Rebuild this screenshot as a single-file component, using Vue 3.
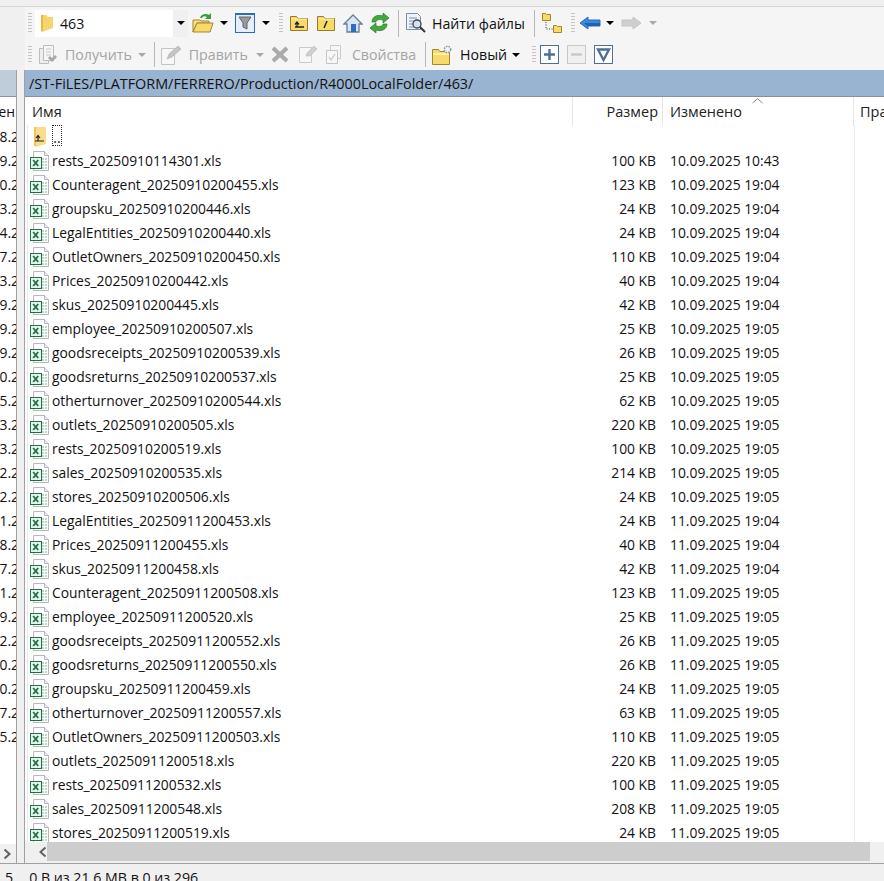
<script setup>
const files = [
  ['rests_20250910114301.xls', '100 KB', '10.09.2025 10:43'],
  ['Counteragent_20250910200455.xls', '123 KB', '10.09.2025 19:04'],
  ['groupsku_20250910200446.xls', '24 KB', '10.09.2025 19:04'],
  ['LegalEntities_20250910200440.xls', '24 KB', '10.09.2025 19:04'],
  ['OutletOwners_20250910200450.xls', '110 KB', '10.09.2025 19:04'],
  ['Prices_20250910200442.xls', '40 KB', '10.09.2025 19:04'],
  ['skus_20250910200445.xls', '42 KB', '10.09.2025 19:04'],
  ['employee_20250910200507.xls', '25 KB', '10.09.2025 19:05'],
  ['goodsreceipts_20250910200539.xls', '26 KB', '10.09.2025 19:05'],
  ['goodsreturns_20250910200537.xls', '25 KB', '10.09.2025 19:05'],
  ['otherturnover_20250910200544.xls', '62 KB', '10.09.2025 19:05'],
  ['outlets_20250910200505.xls', '220 KB', '10.09.2025 19:05'],
  ['rests_20250910200519.xls', '100 KB', '10.09.2025 19:05'],
  ['sales_20250910200535.xls', '214 KB', '10.09.2025 19:05'],
  ['stores_20250910200506.xls', '24 KB', '10.09.2025 19:05'],
  ['LegalEntities_20250911200453.xls', '24 KB', '11.09.2025 19:04'],
  ['Prices_20250911200455.xls', '40 KB', '11.09.2025 19:04'],
  ['skus_20250911200458.xls', '42 KB', '11.09.2025 19:04'],
  ['Counteragent_20250911200508.xls', '123 KB', '11.09.2025 19:05'],
  ['employee_20250911200520.xls', '25 KB', '11.09.2025 19:05'],
  ['goodsreceipts_20250911200552.xls', '26 KB', '11.09.2025 19:05'],
  ['goodsreturns_20250911200550.xls', '26 KB', '11.09.2025 19:05'],
  ['groupsku_20250911200459.xls', '24 KB', '11.09.2025 19:05'],
  ['otherturnover_20250911200557.xls', '63 KB', '11.09.2025 19:05'],
  ['OutletOwners_20250911200503.xls', '110 KB', '11.09.2025 19:05'],
  ['outlets_20250911200518.xls', '220 KB', '11.09.2025 19:05'],
  ['rests_20250911200532.xls', '100 KB', '11.09.2025 19:05'],
  ['sales_20250911200548.xls', '208 KB', '11.09.2025 19:05'],
  ['stores_20250911200519.xls', '24 KB', '11.09.2025 19:05']
]
const leftCol = ['8.2', '9.2', '0.2', '3.2', '4.2', '7.2', '3.2', '9.2', '9.2', '9.2', '0.2', '5.2', '3.2', '3.2', '2.2', '2.2', '1.2', '8.2', '7.2', '1.2', '9.2', '2.2', '0.2', '0.2', '7.2', '5.2']
</script>

<template>
  <div class="app">
    <div class="topline"></div>

    <div class="toolbar row1">
      <span class="grip"></span>
      <div class="combo">
        <svg class="combo_folder" width="13" height="22" viewBox="0 0 13 22"><path d="M0 3h5l2 2h5v11L1 20 0 19z" fill="#f7d56e"/><path d="M0 3h2v16H0z" fill="#e8b93f"/></svg>
        <span class="combo_text">463</span>
        <span class="combo_drop"><i class="arrow"></i></span>
      </div>
      <span class="cell w30">
        <svg width="22" height="22" viewBox="0 0 22 22"><path d="M8 6c1-4 6-5 9-3l2-2v6h-6l2-2c-2-1-4-1-5 1z" fill="#3f9a3c"/><path d="M1 8h7l1 1h8v2H5L1 20z" fill="#f8e08a" stroke="#a5862a"/><path d="M5 11h16l-3 9H1z" fill="#f7d96c" stroke="#a5862a"/></svg>
      </span>
      <span class="cell w12"><i class="arrow"></i></span>
      <span class="cell w30">
        <svg width="20" height="20" viewBox="0 0 20 20"><rect x=".5" y=".5" width="19" height="19" fill="#e6eefa" stroke="#2d6bc0"/><path d="M.5 1h19" stroke="#2d6bc0" stroke-width="2"/><path d="M4 4h12l-4 6v6l-4-2v-4z" fill="#9a9a9a" stroke="#666"/></svg>
      </span>
      <span class="cell w12"><i class="arrow"></i></span>
      <span class="grip after_arrow"></span>
      <span class="cell w27">
        <svg width="18" height="16" viewBox="0 0 18 16"><path d="M.5 15.500v-14h6l1.500 2h9.500v12z" fill="#f8da6b" stroke="#9a7d20"/><path d="M1 4h16" stroke="#fff3b5"/><path d="M5 12h9M7 12V7.500M5 9.500l2-2.500 2 2.500" fill="none" stroke="#222" stroke-width="1.300"/></svg>
      </span>
      <span class="cell w27">
        <svg width="18" height="16" viewBox="0 0 18 16"><path d="M.5 15.500v-14h6l1.500 2h9.500v12z" fill="#f8da6b" stroke="#9a7d20"/><path d="M1 4h16" stroke="#fff3b5"/><path d="M7 13l3-7" stroke="#222" stroke-width="1.500"/></svg>
      </span>
      <span class="cell w27">
        <svg width="20" height="19" viewBox="0 0 20 19"><path d="M10 1L1 10h3v8h12v-8h3z" fill="#dde6f0" stroke="#5f7f9f" stroke-width="1.300"/><rect x="8" y="10" width="5" height="8" fill="#2a6fc4"/></svg>
      </span>
      <span class="cell w27">
        <svg width="19" height="20" viewBox="0 0 19 20"><path d="M2 9c0-5 5-8 11-6V0l6 5-6 5V7C9 6 6 7 6 9z" fill="#45a83e" stroke="#2a7d28" stroke-width=".7"/><path d="M17 11c0 5-5 8-11 6v3l-6-5 6-5v3c4 1 7 0 7-2z" fill="#45a83e" stroke="#2a7d28" stroke-width=".7"/></svg>
      </span>
      <span class="sep sep_find"></span>
      <span class="cell find_icon">
        <svg width="21" height="21" viewBox="0 0 21 21"><path d="M1.500.5h11l3 3v13h-14z" fill="#eef3f9" stroke="#7890aa"/><path d="M4 5h8M4 8h5M4 11h4M4 14h5" stroke="#6f8fb5"/><circle cx="12" cy="11" r="4" fill="#cfe3f5" stroke="#444" stroke-width="1.300"/><path d="M15 14l5 5" stroke="#333" stroke-width="2"/></svg>
      </span>
      <span class="tool_label find_text">Найти файлы</span>
      <span class="sep sep_tree"></span>
      <span class="cell tree_icon">
        <svg width="22" height="22" viewBox="0 0 22 22"><path d="M1.500 8.500v-7h3l1 1h4v6z" fill="#f8da6b" stroke="#a5862a"/><path d="M12.500 20.500v-7h3l1 1h4v6z" fill="#f8da6b" stroke="#a5862a"/><path d="M5 10v7h7" fill="none" stroke="#333" stroke-dasharray="1 1.500"/></svg>
      </span>
      <span class="grip after_tree"></span>
      <span class="cell back_icon">
        <svg width="22" height="14" viewBox="0 0 22 14"><path d="M1 7l8-6v3h12v6H9v3z" fill="#3c86e0" stroke="#2e6bb8"/><path d="M9 10h12V7H5z" fill="#1f5fb5"/></svg>
      </span>
      <span class="cell w12 nudge"><i class="arrow"></i></span>
      <span class="cell fwd_icon">
        <svg width="21" height="14" viewBox="0 0 21 14"><path d="M20 7l-8-6v3H1v6h11v3z" fill="#cfcfcf" stroke="#c4c4c4"/></svg>
      </span>
      <span class="cell w12 nudge2"><i class="arrow off"></i></span>
    </div>

    <div class="toolbar row2">
      <span class="grip short"></span>
      <span class="cell doc_icon">
        <svg width="20" height="20" viewBox="0 0 20 20"><path d="M1.500 3.500h9v15h-9z" fill="#eee" stroke="#bdbdbd"/><path d="M5.500.500h10v15h-10z" fill="#f6f6f6" stroke="#bdbdbd"/><path d="M8 4h5M8 7h5M8 10h5" stroke="#c8c8c8"/><path d="M10 13l4 4 5-5-2-2-3 3-2-2z" fill="#a8a8a8"/></svg>
      </span>
      <span class="tool_label off get_text">Получить</span>
      <span class="cell w12 get_arrow"><i class="arrow off"></i></span>
      <span class="sep sep_edit"></span>
      <span class="cell edit_icon">
        <svg width="21" height="20" viewBox="0 0 21 20"><path d="M.5 3.500h13v16H.5z" fill="#f7f7f7" stroke="#c4c4c4"/><path d="M6 14l2-5 9-8 3 3-9 8z" fill="#c4c4c4" stroke="#ababab" stroke-width=".6"/></svg>
      </span>
      <span class="tool_label off edit_text">Править</span>
      <span class="cell w12 edit_arrow"><i class="arrow off"></i></span>
      <span class="cell del_icon">
        <svg width="18" height="17" viewBox="0 0 18 17"><path d="M2 2l14 13M16 2L2 15" stroke="#ababab" stroke-width="4.200"/></svg>
      </span>
      <span class="cell w27 note_icon">
        <svg width="19" height="19" viewBox="0 0 19 19"><path d="M.5 2.500h12v15H.5z" fill="#f7f7f7" stroke="#cacaca"/><path d="M7 11l1-3 7-7 3 3-7 7z" fill="#cfcfcf" stroke="#b9b9b9" stroke-width=".6"/></svg>
      </span>
      <span class="cell w27 prop_icon">
        <svg width="19" height="19" viewBox="0 0 19 19"><path d="M4.500.5h10v13h-10z" fill="#f6f6f6" stroke="#cacaca"/><path d="M.5 5.500h11v13H.5z" fill="#f7f7f7" stroke="#c4c4c4"/><path d="M3 12l2 3 4-6" fill="none" stroke="#c4c4c4" stroke-width="1.200"/></svg>
      </span>
      <span class="tool_label off prop_text">Свойства</span>
      <span class="sep sep_new"></span>
      <span class="cell new_icon">
        <svg width="21" height="20" viewBox="0 0 21 20"><path d="M.5 19.500v-15h6l1.500 2h9.500v13z" fill="#f8da6b" stroke="#a5862a"/><path d="M1 9h16" stroke="#fff2ac" stroke-width="2"/><circle cx="15.500" cy="4.500" r="3.200" fill="#eef3f9" stroke="#7d93a8" stroke-width="1.400" stroke-dasharray="1.600 1"/></svg>
      </span>
      <span class="tool_label new_text">Новый</span>
      <span class="cell w12 new_arrow"><i class="arrow"></i></span>
      <span class="grip short after_new"></span>
      <span class="box plus"><svg width="17" height="17" viewBox="0 0 17 17"><path d="M8.500 3v11M3 8.500h11" stroke="#4f6f98" stroke-width="2.400"/></svg></span>
      <span class="box minus"><svg width="17" height="17" viewBox="0 0 17 17"><path d="M3 8.500h11" stroke="#c8c8c8" stroke-width="2.400"/></svg></span>
      <span class="box tri"><svg width="17" height="17" viewBox="0 0 17 17"><path d="M3 3.500h11L8.500 14z" fill="none" stroke="#4f6f98" stroke-width="2.400"/></svg></span>
    </div>

    <div class="panels">
      <div class="panel_left">
        <div class="path path_off"></div>
        <div class="left_body">
          <div class="left_head"><span>ен</span></div>
          <div class="left_list">
            <div v-for="(t, i) in leftCol" :key="i" class="left_row"><span>{{ t }}</span></div>
          </div>
        </div>
        <div class="left_scroll">
          <svg width="9" height="12" viewBox="0 0 9 12"><path d="M1.500 1.500L6.500 6l-5 4.500" fill="none" stroke="#606060" stroke-width="2"/></svg>
        </div>
      </div>

      <div class="panel_right">
        <div class="path">/ST-FiLES/PLATFORM/FERRERO/Production/R4000LocalFolder/463/</div>
        <div class="head">
          <div class="head_name">Имя</div>
          <div class="head_size">Размер</div>
          <div class="head_date">
            Изменено
            <svg class="sort" width="11" height="6" viewBox="0 0 11 6"><path d="M.5 5L5.500 .7 10.500 5" fill="none" stroke="#8a8a8a"/></svg>
          </div>
          <div class="head_attr">Права</div>
        </div>
        <div class="list">
          <div class="row">
            <div class="name">
              <svg class="icon up_icon" width="14" height="20" viewBox="0 0 14 20"><path d="M1 0h12v17L3 20 1 18z" fill="#f9dd8a"/><path d="M1 0h2v19H1z" fill="#f0c65a"/><path d="M2 14h9M5 14V9M3 11l2-2.500L7 11" fill="none" stroke="#222" stroke-width="1.200"/></svg>
              <span class="updir">..</span>
            </div>
            <div></div><div></div><div class="attr"></div>
          </div>
          <div v-for="f in files" :key="f[0]" class="row">
            <div class="name">
              <svg class="icon" width="20" height="20" viewBox="0 0 20 20">
                <path d="M3.500 .5h11l4 4v15h-15z" fill="#fff" stroke="#b8b8b8"/>
                <path d="M14.500 .5v4h4" fill="#eee" stroke="#b8b8b8"/>
                <path d="M12 8h5M12 11h5M12 14h5M12 17h5" stroke="#9fcdb2" stroke-width="1.500"/>
                <path d="M14.500 7v11" stroke="#fff"/>
                <rect x=".5" y="6.500" width="11" height="11" fill="#e8f3ec" stroke="#1e7145"/>
                <path d="M3.200 9l5 6M8.200 9l-5 6" stroke="#1e7145" stroke-width="1.800"/>
              </svg>
              <span>{{ f[0] }}</span>
            </div>
            <div class="size">{{ f[1] }}</div>
            <div class="date">{{ f[2] }}</div>
            <div class="attr"></div>
          </div>
        </div>
        <div class="scroll">
          <span class="scroll_btn">
            <svg width="9" height="12" viewBox="0 0 9 12"><path d="M7.500 1.500L2.500 6l5 4.500" fill="none" stroke="#606060" stroke-width="2"/></svg>
          </span>
          <span class="thumb"></span>
        </div>
      </div>
    </div>

    <div class="status">
      <span class="status_left">5</span>
      <span class="status_right">0 В из 21,6 MB в 0 из 296</span>
    </div>
  </div>
</template>

<style>
html, body { overflow: hidden; }
</style>

<style scoped>
.app {
  width: 884px;
  height: 881px;
  overflow: hidden;
  display: flex;
  flex-direction: column;
  background: #f0f0f0;
  color: #111;
  font-family: "Open Sans", "Noto Sans", sans-serif;
  font-size: 13.85px;
}
.topline {
  height: 6px;
  border-bottom: 1px solid #d6d6d6;
  flex: none;
}

/* toolbars */
.toolbar {
  display: flex;
  align-items: center;
  flex: none;
  margin-left: 25px;
  padding-left: 3px;
  background: #f5f5f5;
}
.row1 { height: 32px; }
.row2 { height: 31px; }
.grip {
  flex: none;
  width: 4px;
  height: 21px;
  background: repeating-linear-gradient(to bottom, #c4c4c4 0 1px, #f5f5f5 1px 3px);
}
.grip.short { height: 18px; }
.cell {
  flex: none;
  display: flex;
  align-items: center;
  justify-content: center;
}
.w30 { width: 30px; }
.w27 { width: 27px; }
.w12 { width: 12px; }
.arrow {
  display: block;
  width: 0;
  height: 0;
  border-left: 4px solid transparent;
  border-right: 4px solid transparent;
  border-top: 4px solid #000;
}
.arrow.off { border-top-color: #a8a8a8; }
.sep {
  flex: none;
  width: 1px;
  height: 27px;
  background: #b8b8b8;
}
.tool_label { flex: none; white-space: nowrap; font-size: 14.2px; }
.tool_label.off { color: #a4a4a4; }

.combo {
  flex: none;
  width: 153px;
  height: 27px;
  margin-left: 3px;
  display: flex;
  align-items: center;
  background: #fff;
}
.combo_folder { margin-left: 6px; }
.combo_text { margin-left: 6px; font-size: 14.2px; }
.combo_drop {
  margin-left: auto;
  align-self: stretch;
  width: 15px;
  display: flex;
  align-items: center;
  justify-content: center;
  background: #f0f0f0;
}

.after_arrow { margin-left: 7px; margin-right: 2px; }
.sep_find { margin-left: 5px; }
.find_icon { margin-left: 6px; width: 21px; }
.find_text { margin-left: 6px; }
.sep_tree { margin-left: 9px; }
.tree_icon { margin-left: 6px; width: 22px; }
.after_tree { margin-left: 8px; }
.back_icon { margin-left: 4px; width: 22px; }
.nudge { margin-left: 3px; }
.fwd_icon { margin-left: 5px; width: 21px; }
.nudge2 { margin-left: 5px; }

.doc_icon { margin-left: 6px; width: 20px; }
.get_text { margin-left: 7px; }
.get_arrow { margin-left: 4px; }
.sep_edit { margin-left: 6px; height: 25px; }
.edit_icon { margin-left: 6px; width: 21px; }
.edit_text { margin-left: 7px; }
.edit_arrow { margin-left: 6px; }
.del_icon { margin-left: 5px; width: 18px; }
.note_icon { margin-left: 6px; }
.prop_icon { margin-left: 0; }
.prop_text { margin-left: 3px; }
.sep_new { margin-left: 9px; height: 25px; }
.new_icon { margin-left: 6px; width: 21px; }
.new_text { margin-left: 7px; color: #111; }
.new_arrow { margin-left: 3px; }
.after_new { margin-left: 10px; }
.box {
  flex: none;
  width: 19px;
  height: 19px;
  display: flex;
  align-items: center;
  justify-content: center;
  border: 1px solid #4f6f98;
  box-sizing: border-box;
  background: #fff;
  margin-left: 8px;
}
.box.plus { margin-left: 4px; }
.box.minus { border-color: #c8c8c8; background: #f0f0f0; }

/* panels */
.panels {
  flex: none;
  height: 793px;
  display: flex;
  border-bottom: 1px solid #a0a0a0;
}
.panel_left {
  flex: none;
  width: 16px;
  display: flex;
  flex-direction: column;
  border-right: 1px solid #a0a0a0;
  overflow: hidden;
}
.panel_right {
  flex: none;
  width: 859px;
  margin-left: 7px;
  display: flex;
  flex-direction: column;
  border-left: 1px solid #a0a0a0;
  overflow: hidden;
}
.path {
  flex: none;
  height: 26px;
  line-height: 27px;
  padding-left: 4px;
  background: #99b4d1;
  border-bottom: 1px solid #8a9099;
  white-space: nowrap;
  font-size: 14.4px;
}
.path_off { background: #bfcddb; border-bottom-color: #8a9099; }

.left_body {
  flex: 1;
  background: #fff;
  overflow: hidden;
}
.left_head {
  height: 28px;
  line-height: 29px;
  display: flex;
  justify-content: flex-end;
}
.left_head span { margin-right: 1px; }
.left_row {
  height: 24px;
  line-height: 24px;
  display: flex;
  justify-content: flex-end;
  white-space: nowrap;
}
.left_row span { margin-right: -3px; }
.left_scroll {
  flex: none;
  height: 19px;
  display: flex;
  align-items: center;
  padding-left: 3px;
  background: #f0f0f0;
}

.head {
  flex: none;
  height: 28px;
  display: grid;
  grid-template-columns: 548px 90px 191px 1fr;
  background: #fff;
  line-height: 29px;
  color: #222;
  font-size: 14.5px;
}
.head > div { border-right: 1px solid #e6e6e6; position: relative; }
.head_name { padding-left: 7px; }
.head_size { text-align: right; padding-right: 4px; }
.head_date { padding-left: 7px; }
.head_attr { padding-left: 6px; border-right: none !important; white-space: nowrap; overflow: hidden; }
.sort { position: absolute; left: 89px; top: 1px; }

.list {
  flex: none;
  height: 717px;
  overflow: hidden;
  background: #fff;
}
.row {
  height: 24px;
  display: grid;
  grid-template-columns: 548px 90px 191px 1fr;
  line-height: 24px;
}
.name {
  display: flex;
  align-items: center;
  padding-left: 5px;
  position: relative;
  white-space: nowrap;
}
.name::before {
  content: "";
  position: absolute;
  left: 2px;
  top: 0;
  bottom: 0;
  width: 1px;
  background: #e3ecf8;
}
.icon { flex: none; margin-right: 2px; }
.up_icon { margin-left: 3px; margin-right: 5px; }
.updir {
  width: 10px;
  height: 21px;
  box-sizing: border-box;
  border: 1px dotted #333;
  line-height: 24px;
  align-self: flex-start;
  text-align: center;
  overflow: hidden;
}
.size { text-align: right; padding-right: 7px; }
.date { padding-left: 7px; }
.attr { border-left: 1px solid #e3ecf8; }

.scroll {
  flex: none;
  height: 19px;
  display: flex;
  background: #f0f0f0;
}
.scroll_btn {
  width: 22px;
  display: flex;
  align-items: center;
  justify-content: flex-end;
}
.thumb {
  flex: none;
  width: 823px;
  background: #cdcdcd;
}

.status {
  flex: none;
  height: 18px;
  display: flex;
  line-height: 28px;
  white-space: nowrap;
  font-size: 14.2px;
}
.status_left { margin-left: 5px; }
.status_right { margin-left: 16px; }
</style>
